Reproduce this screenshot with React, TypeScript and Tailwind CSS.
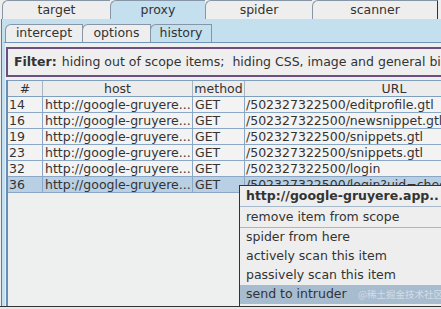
import React from "react";

type TabProps = { label: string; width: string; selected?: boolean; last?: boolean };

function TopTab({ label, width, selected, last }: TabProps) {
  return (
    <div
      className={`${width} shrink-0 h-full flex items-center justify-center border-t border-l border-[#8796a6] rounded-tl-[6px] ${
        last ? "border-r border-r-[#333]" : ""
      } ${selected ? "bg-[#c4dfed]" : "bg-[#eeeeee]"}`}
    >
      <span className="leading-none pt-[1px]">{label}</span>
    </div>
  );
}

function SubTab({ label, width, selected }: TabProps) {
  return (
    <div
      className={`${width} shrink-0 h-full flex items-center justify-center border-t border-l border-r border-[#8796a6] rounded-tl-[6px] -mr-[1px] ${
        selected ? "bg-[#c4dfed]" : "bg-[#eeeeee]"
      }`}
    >
      <span className="leading-none">{label}</span>
    </div>
  );
}

const rows = [
  { id: "14", url: "/502327322500/editprofile.gtl" },
  { id: "16", url: "/502327322500/newsnippet.gtl" },
  { id: "19", url: "/502327322500/snippets.gtl" },
  { id: "23", url: "/502327322500/snippets.gtl" },
  { id: "32", url: "/502327322500/login" },
  { id: "36", url: "/502327322500/login?uid=cheddar&pw=", selected: true },
];

export default function App() {
  return (
    <div className="w-[441px] h-[309px] overflow-hidden relative bg-[#eeeeee] text-[#333] text-[12.5px] font-['DejaVu_Sans',sans-serif]">
      <div className="h-[306px] flex flex-col">
        {/* main tabs */}
        <div className="h-[19px] flex pl-[2px] shrink-0">
          <TopTab label="target" width="w-[108px]" />
          <TopTab label="proxy" width="w-[95px]" selected />
          <TopTab label="spider" width="w-[107px]" />
          <TopTab label="scanner" width="w-[126px]" last />
        </div>

        {/* proxy panel */}
        <div className="flex-1 flex flex-col bg-[#c4dfed] ml-[1px] border-l border-[#5b7ba3] min-h-0">
          {/* sub tabs */}
          <div className="h-[18px] mt-[5px] flex pl-[3px] shrink-0">
            <SubTab label="intercept" width="w-[78px]" />
            <SubTab label="options" width="w-[69px]" />
            <SubTab label="history" width="w-[62px]" selected />
          </div>

          <div className="flex-1 flex flex-col border-t border-[#6f93b9] bg-[#eeeeee] ml-[1px] border-l-2 border-l-[#c4dfed] min-h-0">
            {/* filter */}
            <div className="mt-[4px] ml-[1px] w-[460px] h-[30px] shrink-0 border-2 border-[#6d4f7d] bg-[#efefef] flex items-center pl-[6px] whitespace-nowrap">
              <span className="font-bold">Filter:</span>
              <span className="ml-[5px]">hiding out of scope items;&nbsp; hiding CSS, image and general binary content</span>
            </div>

            {/* table */}
            <div className="mt-[3px] ml-[1px] flex-1 flex flex-col border-l-2 border-[#6a8db3] bg-[#eef0f0] min-h-0 overflow-hidden">
              <div className="w-[540px] h-[17px] flex shrink-0 border-t border-b border-[#7f9fbf] bg-[#ececec] leading-[15px] whitespace-nowrap">
                <div className="w-[35px] shrink-0 border-r border-[#a8b4c0] text-center">#</div>
                <div className="w-[150px] shrink-0 border-r border-[#a8b4c0] text-center">host</div>
                <div className="w-[52px] shrink-0 border-r border-[#a8b4c0] text-center">method</div>
                <div className="w-[298px] shrink-0 text-center">URL</div>
              </div>
              {rows.map((r) => (
                <div
                  key={r.id}
                  className={`w-[540px] h-[16px] flex shrink-0 border-b border-[#8aa8c6] leading-[15px] whitespace-nowrap ${
                    r.selected ? "bg-[#b9d0e4]" : "bg-[#f3f3f3]"
                  }`}
                >
                  <div className="w-[35px] shrink-0 border-r border-[#8aa8c6] pl-[1px]">{r.id}</div>
                  <div className="w-[150px] shrink-0 border-r border-[#8aa8c6] pl-[2px] overflow-hidden">
                    http://google-gruyere...
                  </div>
                  <div className="w-[52px] shrink-0 border-r border-[#8aa8c6] pl-[2px]">GET</div>
                  <div className="w-[298px] shrink-0 pl-[1px] overflow-hidden">{r.url}</div>
                </div>
              ))}
            </div>
          </div>
        </div>
      </div>
      <div className="h-[1px] bg-[#333]" />
      <div className="h-[2px] bg-[#e6e6e6]" />

      {/* context menu */}
      <div className="absolute left-[239px] top-[185px] w-[230px] h-[122px] border border-[#333] bg-[#eeeeee] flex flex-col whitespace-nowrap">
        <div className="h-[21px] shrink-0 flex items-center pl-[6px] font-bold border-b border-[#a6b9cc]">
          http://google-gruyere.app..
        </div>
        <div className="h-[21px] shrink-0 flex items-center pl-[6px] border-b border-[#a6b9cc]">
          remove item from scope
        </div>
        <div className="h-[19px] shrink-0 flex items-center pl-[6px]">spider from here</div>
        <div className="h-[19px] shrink-0 flex items-center pl-[6px]">actively scan this item</div>
        <div className="h-[19px] shrink-0 flex items-center pl-[6px]">passively scan this item</div>
        <div className="h-[19px] shrink-0 flex items-center pl-[6px] bg-[#a8bccf] relative">
          send to intruder
          <span className="absolute left-[118px] top-[5px] text-[9.5px] leading-none text-[#d3dde8] font-['Noto_Sans_CJK_SC',sans-serif]">
            @稀土掘金技术社区
          </span>
        </div>
      </div>
    </div>
  );
}
